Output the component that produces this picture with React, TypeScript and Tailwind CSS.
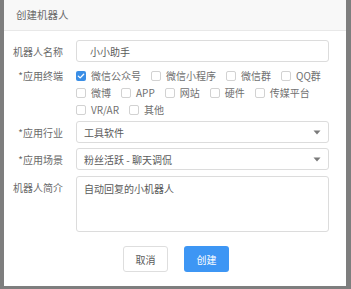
import React from "react";

const Check = ({ checked }: { checked?: boolean }) =>
  checked ? (
    <span className="w-[10px] h-[10px] rounded-[2px] bg-[#3a8ee6] flex items-center justify-center shrink-0">
      <svg width="8" height="8" viewBox="0 0 8 8">
        <path d="M1.3 4.1 L3.2 5.9 L6.7 2.2" stroke="#fff" strokeWidth="1.3" fill="none" strokeLinecap="round" strokeLinejoin="round" />
      </svg>
    </span>
  ) : (
    <span className="w-[10px] h-[10px] rounded-[2px] border border-[#d2d2d2] bg-white shrink-0" />
  );

const Opt = ({ label, checked }: { label: string; checked?: boolean }) => (
  <label className="flex items-center h-[17px] gap-[5px]">
    <Check checked={checked} />
    <span>{label}</span>
  </label>
);

const Arrow = () => (
  <svg width="8" height="5" viewBox="0 0 8 5" className="mr-[7px]">
    <path d="M0.5 0.5 L7.5 0.5 L4 4.5 Z" fill="#7a7a7a" />
  </svg>
);

export default function App() {
  return (
    <div
      className="w-[351px] h-[289px] bg-[#7e7e7e] pl-[4px] overflow-hidden"
      style={{ fontFamily: '"Noto Sans CJK SC", "Noto Sans", sans-serif' }}
    >
      <div className="w-[342px] h-[286px] bg-white flex flex-col text-[10px] text-[#666]">
        <div className="h-[31px] bg-[#f8f8f8] border-b border-[#e8e8e8] flex items-center pl-[12px] text-[10.5px] text-[#6a6a6a]">
          创建机器人
        </div>
        <div className="flex flex-col pr-[17px]">
          <div className="flex items-center mt-[9px]">
            <div className="w-[72px] text-right pr-[13px] text-[#6a6a6a]">机器人名称</div>
            <div className="flex-1 h-[22px] border border-[#dcdcdc] rounded-[3px] flex items-center pl-[13px] text-[#5a5a5a]">
              小小助手
            </div>
          </div>
          <div className="flex mt-[5px]">
            <div className="w-[72px] text-right pr-[13px] text-[#6a6a6a] h-[17px] leading-[17px]">*应用终端</div>
            <div className="flex-1 flex flex-wrap gap-x-[10px] text-[#707070]">
              <Opt label="微信公众号" checked />
              <Opt label="微信小程序" />
              <Opt label="微信群" />
              <Opt label="QQ群" />
              <Opt label="微博" />
              <Opt label="APP" />
              <Opt label="网站" />
              <Opt label="硬件" />
              <Opt label="传媒平台" />
              <Opt label="VR/AR" />
              <Opt label="其他" />
            </div>
          </div>
          <div className="flex items-center mt-[3px]">
            <div className="w-[72px] text-right pr-[13px] text-[#6a6a6a]">*应用行业</div>
            <div className="flex-1 h-[22px] border border-[#dcdcdc] rounded-[3px] flex items-center justify-between pl-[7px] text-[#5a5a5a]">
              <span>工具软件</span>
              <Arrow />
            </div>
          </div>
          <div className="flex items-center mt-[5px]">
            <div className="w-[72px] text-right pr-[13px] text-[#6a6a6a]">*应用场景</div>
            <div className="flex-1 h-[22px] border border-[#dcdcdc] rounded-[3px] flex items-center justify-between pl-[7px] text-[#5a5a5a]">
              <span>粉丝活跃 - 聊天调侃</span>
              <Arrow />
            </div>
          </div>
          <div className="flex mt-[6px]">
            <div className="w-[72px] text-right pr-[13px] text-[#6a6a6a] pt-[4px]">机器人简介</div>
            <div className="flex-1 h-[56px] border border-[#dcdcdc] rounded-[3px] pl-[7px] pt-[4px] text-[#5a5a5a]">
              自动回复的小机器人
            </div>
          </div>
          <div className="flex justify-center gap-[16px] mt-[14px] pl-[19px]">
            <button className="w-[45px] h-[26px] border border-[#dedede] rounded-[3px] bg-white text-[#5a5a5a] text-[10px]">
              取消
            </button>
            <button className="w-[45px] h-[26px] rounded-[3px] bg-[#3d96f4] text-white text-[10px]">
              创建
            </button>
          </div>
        </div>
      </div>
    </div>
  );
}
